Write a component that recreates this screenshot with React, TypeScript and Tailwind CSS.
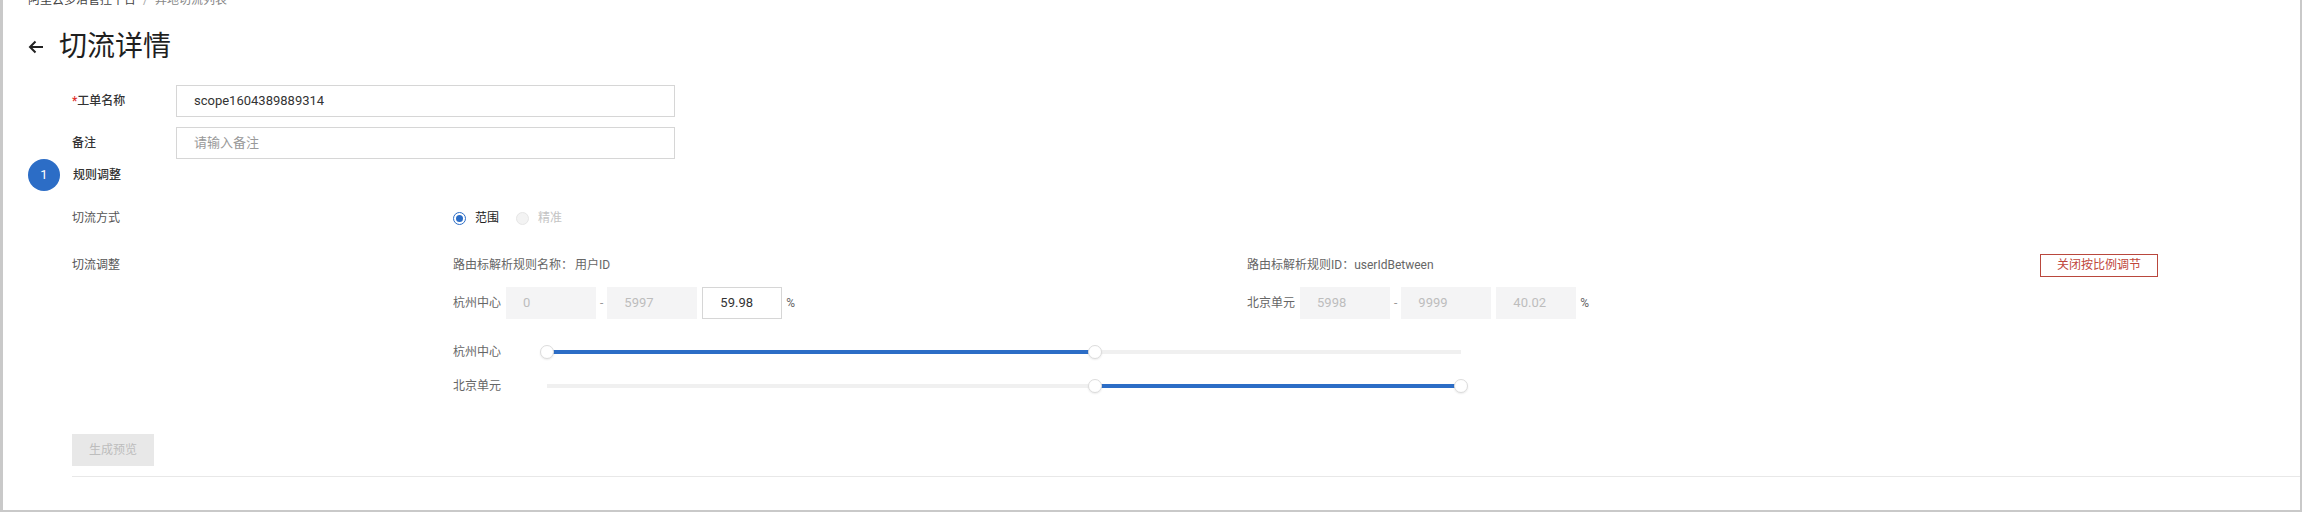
import React from "react";

function Slider({ from, to }: { from: number; to: number }) {
  return (
    <div className="relative w-[928px] h-5">
      <div className="absolute left-[7px] right-[7px] top-[8px] h-1 bg-[#f0f0f0]" />
      <div
        className="absolute top-[8px] h-1 bg-[#2c6dc6]"
        style={{ left: `calc(7px + ${from} * (100% - 14px))`, width: `calc(${to - from} * (100% - 14px))` }}
      />
      {[from, to].map((p, i) => (
        <div
          key={i}
          className="absolute top-[3px] w-[14px] h-[14px] rounded-full bg-white border border-[#dcdcdc] shadow-[0_1px_2px_rgba(0,0,0,0.08)]"
          style={{ left: `calc(${p} * (100% - 14px))` }}
        />
      ))}
    </div>
  );
}

function Box({ value, w, active }: { value: string; w: string; active?: boolean }) {
  return (
    <div
      className={
        active
          ? `${w} h-8 pl-[17px] flex items-center bg-white border border-[#d6d6d6] text-[#333] text-[13px]`
          : `${w} h-8 pl-[17px] flex items-center bg-[#f4f4f5] text-[#bdbdbd] text-[13px]`
      }
    >
      {value}
    </div>
  );
}

function RangeRow({ label, a, b, pct, pctActive }: { label: string; a: string; b: string; pct: string; pctActive?: boolean }) {
  return (
    <div className="flex items-center h-8">
      <span className="text-[#666] mr-[5px]">{label}</span>
      <Box value={a} w="w-[90px]" />
      <span className="px-[4px] text-[#999]">-</span>
      <Box value={b} w="w-[90px]" />
      <div className="ml-[5px]">
        <Box value={pct} w="w-[80px]" active={pctActive} />
      </div>
      <span className="ml-[4px] text-[#666]">%</span>
    </div>
  );
}

export default function App() {
  return (
    <div className="w-[2302px] h-[512px] overflow-hidden bg-white border-l-[3px] border-r-2 border-b-2 border-[#c9c9c9] font-[Roboto,'Noto_Sans_CJK_SC',sans-serif] text-[12px] text-[#333]">
      <div className="pl-[25px]">
        {/* breadcrumb */}
        <div className="-mt-[8px] h-4 leading-4 flex items-center text-[12px]">
          <span className="text-[#444]">阿里云多活管控平台</span>
          <span className="mx-[7px] text-[#aaa]">/</span>
          <span className="text-[#888]">异地切流列表</span>
        </div>

        {/* title */}
        <div className="mt-[19px] h-10 flex items-center">
          <svg width="16" height="14" viewBox="0 0 16 14" className="mr-[15px]">
            <path d="M15 7H2M7.5 1.5L2 7l5.5 5.5" fill="none" stroke="#222" strokeWidth="2" />
          </svg>
          <span className="text-[28px] leading-10 text-[#1f1f1f]">切流详情</span>
        </div>

        {/* form rows */}
        <div className="mt-[18px] flex items-center h-8">
          <div className="w-[148px] pl-[44px] font-medium text-[#333]">
            <span className="text-[#e0302b]">*</span>工单名称
          </div>
          <div className="w-[499px] h-8 border border-[#d6d6d6] pl-[17px] flex items-center text-[13px] text-[#333]">
            scope1604389889314
          </div>
        </div>
        <div className="mt-[10px] flex items-center h-8">
          <div className="w-[148px] pl-[44px] font-medium text-[#333]">备注</div>
          <div className="w-[499px] h-8 border border-[#d6d6d6] pl-[17px] flex items-center text-[13px] text-[#999]">
            请输入备注
          </div>
        </div>

        {/* step */}
        <div className="flex items-center h-8">
          <div className="w-8 h-8 rounded-full bg-[#2c6dc6] text-white flex items-center justify-center text-[13px]">1</div>
          <span className="ml-[13px] font-medium text-[#333]">规则调整</span>
        </div>

        {/* 切流方式 */}
        <div className="mt-[17px] flex items-center h-5">
          <div className="w-[425px] pl-[44px] text-[#555]">切流方式</div>
          <div className="flex items-center">
            <span className="w-[13px] h-[13px] rounded-full border border-[#2c6dc6] flex items-center justify-center">
              <span className="w-[7px] h-[7px] rounded-full bg-[#2c6dc6]" />
            </span>
            <span className="ml-[9px] text-[#222]">范围</span>
            <span className="ml-[17px] w-[13px] h-[13px] rounded-full border border-[#e6e6e6] bg-[#f3f3f3]" />
            <span className="ml-[9px] text-[#c4c4c4]">精准</span>
          </div>
        </div>

        {/* 切流调整 */}
        <div className="mt-[27px] flex">
          <div className="w-[425px] pl-[44px] h-5 leading-5 text-[#555]">切流调整</div>
          <div className="flex flex-col">
            <div className="flex items-center h-5">
              <div className="w-[794px] text-[#666]">
                路由标解析规则名称：<span className="ml-[2px]">用户ID</span>
              </div>
              <div className="w-[793px] text-[#666]">路由标解析规则ID：userIdBetween</div>
              <button className="h-[23px] w-[118px] border border-[#b9473d] text-[#c0463c] text-[12px] bg-white flex items-center justify-center">
                关闭按比例调节
              </button>
            </div>
            <div className="mt-[12px] flex">
              <div className="w-[794px]">
                <RangeRow label="杭州中心" a="0" b="5997" pct="59.98" pctActive />
              </div>
              <div className="w-[793px]">
                <RangeRow label="北京单元" a="5998" b="9999" pct="40.02" />
              </div>
            </div>
            <div className="mt-[23px] flex items-center h-5">
              <span className="w-[87px] text-[#666]">杭州中心</span>
              <Slider from={0} to={0.5998} />
            </div>
            <div className="mt-[14px] flex items-center h-5">
              <span className="w-[87px] text-[#666]">北京单元</span>
              <Slider from={0.5998} to={1} />
            </div>
          </div>
        </div>

        {/* bottom */}
        <div className="mt-[38px] pl-[44px]">
          <button className="w-[82px] h-8 bg-[#e8e8e8] text-[#bdbdbd] text-[12px]">生成预览</button>
          <div className="mt-[10px] h-px bg-[#e8e8e8]" />
        </div>
      </div>
    </div>
  );
}
